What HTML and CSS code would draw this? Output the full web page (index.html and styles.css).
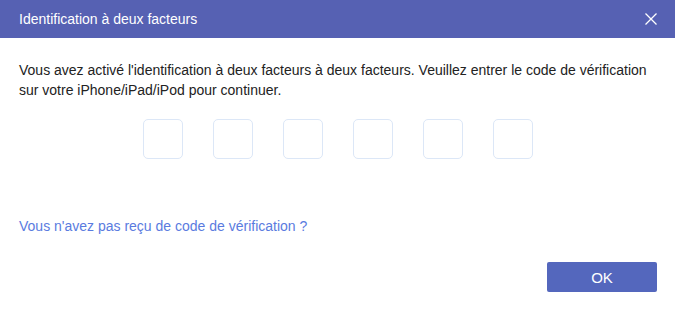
FILE: index.html
```html
<!DOCTYPE html>
<html lang="fr">
<head>
<meta charset="utf-8">
<link rel="stylesheet" href="styles.css">
</head>
<body>
<div class="dialog">
  <div class="header">
    <span class="title">Identification à deux facteurs</span>
    <svg class="close" width="12" height="12" viewBox="0 0 12 12"><path d="M0.5 0.5 L11.5 11.5 M11.5 0.5 L0.5 11.5" stroke="#fff" stroke-width="1.3" fill="none"/></svg>
  </div>
  <div class="body">
    <p class="msg">Vous avez activé l'identification à deux facteurs à deux facteurs. Veuillez entrer le code de vérification sur votre iPhone/iPad/iPod pour continuer.</p>
    <div class="codes">
      <div class="box"></div><div class="box"></div><div class="box"></div><div class="box"></div><div class="box"></div><div class="box"></div>
    </div>
    <a class="link">Vous n'avez pas reçu de code de vérification ?</a>
    <div class="footer"><button class="ok">OK</button></div>
  </div>
</div>
</body>
</html>
```
FILE: styles.css
```css
html, body { margin: 0; padding: 0; background: #fff; }
body { font-family: "Liberation Sans", Arial, sans-serif; width: 675px; height: 311px; overflow: hidden; }
.dialog { width: 675px; height: 311px; display: flex; flex-direction: column; }
.header { height: 38px; flex: none; background: #5661b3; display: flex; align-items: center; justify-content: space-between; padding: 0 18px 0 19px; }
.title { color: #fff; font-size: 14px; }
.close { display: block; }
.body { padding: 0 18px 0 19px; display: flex; flex-direction: column; }
.msg { margin: 22px 0 0; font-size: 14px; line-height: 20px; color: #222; }
.codes { display: flex; justify-content: center; gap: 30px; margin-top: 19px; padding-right: 1px; }
.box { width: 38px; height: 38px; border: 1px solid #dce7f7; border-radius: 5px; }
.link { display: block; margin-top: 59px; font-size: 14px; color: #5a7be0; line-height: 16px; }
.footer { display: flex; justify-content: flex-end; margin-top: 28px; }
.ok { width: 110px; height: 30px; background: #5467bd; color: #fff; border: none; border-radius: 2px; font-family: "Liberation Sans", Arial, sans-serif; font-size: 15px; padding: 0; }
```
